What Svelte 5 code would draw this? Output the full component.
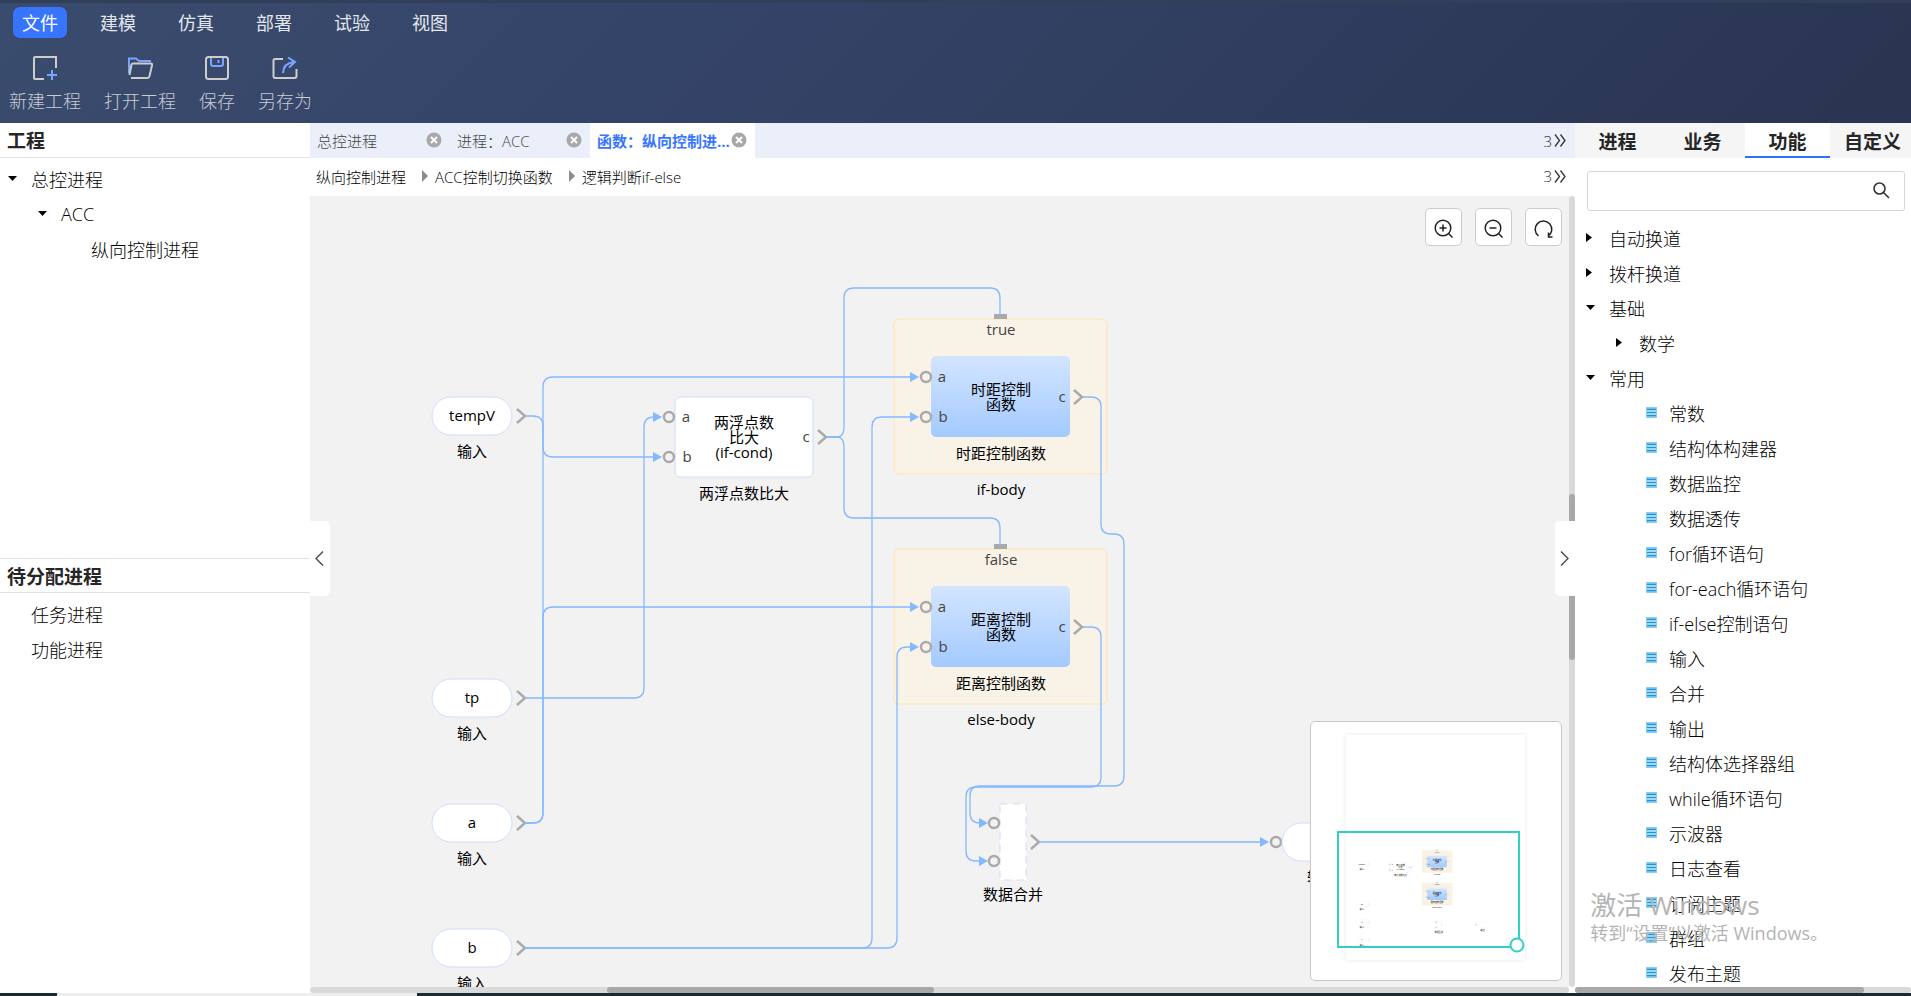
<script>
    let menus = ["文件", "建模", "仿真", "部署", "试验", "视图"];
    let menuActif = $state("文件");

    let outils = [
        { id: "new", nom: "新建工程" },
        { id: "open", nom: "打开工程" },
        { id: "save", nom: "保存" },
        { id: "saveas", nom: "另存为" },
    ];

    let projet = [
        { nom: "总控进程", niveau: 0, type: "open" },
        { nom: "ACC", niveau: 1, type: "open" },
        { nom: "纵向控制进程", niveau: 2, type: "" },
    ];
    let enAttente = ["任务进程", "功能进程"];

    let onglets = [
        { nom: "总控进程" },
        { nom: "进程：ACC" },
        { nom: "函数：纵向控制进...", actif: true },
    ];
    let chemin = ["纵向控制进程", "ACC控制切换函数", "逻辑判断if-else"];

    let familles = ["进程", "业务", "功能", "自定义"];
    let familleActive = $state("功能");
    let recherche = $state("");

    let communs = [
        "常数",
        "结构体构建器",
        "数据监控",
        "数据透传",
        "for循环语句",
        "for-each循环语句",
        "if-else控制语句",
        "输入",
        "合并",
        "输出",
        "结构体选择器组",
        "while循环语句",
        "示波器",
        "日志查看",
        "订阅主题",
        "群组",
        "发布主题",
    ];
    let biblio = [
        { nom: "自动换道", niveau: 0, type: "closed" },
        { nom: "拨杆换道", niveau: 0, type: "closed" },
        { nom: "基础", niveau: 0, type: "open" },
        { nom: "数学", niveau: 1, type: "closed" },
        { nom: "常用", niveau: 0, type: "open" },
        ...communs.map((nom) => ({ nom, niveau: 2, type: "leaf" })),
    ];

    // Graph
    let entrees = [
        { nom: "tempV", y: 220 },
        { nom: "tp", y: 502 },
        { nom: "a", y: 627 },
        { nom: "b", y: 752 },
    ];
    let groupes = [
        { y: 123, cond: "true", lignes: ["时距控制", "函数"], nom: "时距控制函数", titre: "if-body" },
        { y: 353, cond: "false", lignes: ["距离控制", "函数"], nom: "距离控制函数", titre: "else-body" },
    ];
    let liens = [
        "M215 220H223Q233 220 233 230V251Q233 261 243 261H346",
        "M215 627H223Q233 627 233 617V191Q233 181 243 181H602",
        "M215 627H223Q233 627 233 617V421Q233 411 243 411H602",
        "M215 502H324Q334 502 334 492V231Q334 221 344 221H346",
        "M517 241H527Q534 241 534 231V102Q534 92 544 92H680Q690 92 690 102V120",
        "M517 241H527Q534 241 534 251V312Q534 322 544 322H680Q690 322 690 332V350",
        "M215 752H552Q562 752 562 742V231Q562 221 572 221H602",
        "M215 752H577Q587 752 587 742V461Q587 451 597 451H602",
        "M773 201H781Q791 201 791 211V328Q791 338 801 338H804Q814 338 814 348V580Q814 590 804 590H670Q660 590 660 600V617Q660 627 670 627H671",
        "M773 431H781Q791 431 791 441V581Q791 591 781 591H666Q656 591 656 601V655Q656 665 666 665H671",
        "M729 646H952",
    ];
    let fleches = [
        [352, 221],
        [352, 261],
        [609, 181],
        [609, 221],
        [609, 411],
        [609, 451],
        [678, 627],
        [678, 665],
        [959, 646],
    ];
</script>

{#snippet port(x, y)}
    <circle class="port" cx={x} cy={y} r="5" />
{/snippet}

{#snippet sortie(x, y)}
    <path class="sortie" d="M{x} {y - 7}l8 7l-8 7" />
{/snippet}

{#snippet noeuds()}
    {#each entrees as e}
        <rect class="bloc" x="122" y={e.y - 19} width="80" height="38" rx="19" />
        <text x="162" y={e.y + 5}>{e.nom}</text>
        <text x="162" y={e.y + 41}>输入</text>
        {@render sortie(207, e.y)}
    {/each}

    <rect class="bloc" x="365" y="201" width="138" height="80" rx="5" />
    <text x="434" y="232">两浮点数</text>
    <text x="434" y="247">比大</text>
    <text x="434" y="262">(if-cond)</text>
    <text x="434" y="303">两浮点数比大</text>
    <text class="nomPort" x="376" y="226">a</text>
    <text class="nomPort" x="377" y="266">b</text>
    <text class="nomPort" x="496" y="246">c</text>
    {@render port(359, 221)}
    {@render port(359, 261)}
    {@render sortie(508, 241)}

    {#each groupes as g}
        <rect class="groupe" x="584" y={g.y} width="213" height="155" rx="5" />
        <rect class="poignee" x="684" y={g.y - 5} width="13" height="5" />
        <text class="nomPort" x="691" y={g.y + 16}>{g.cond}</text>
        <rect class="fonction" x="621" y={g.y + 37} width="139" height="81" rx="5" />
        {#each g.lignes as ligne, i}
            <text x="691" y={g.y + 76 + i * 15}>{ligne}</text>
        {/each}
        <text x="691" y={g.y + 140}>{g.nom}</text>
        <text x="691" y={g.y + 176}>{g.titre}</text>
        <text class="nomPort" x="632" y={g.y + 63}>a</text>
        <text class="nomPort" x="633" y={g.y + 103}>b</text>
        <text class="nomPort" x="752" y={g.y + 83}>c</text>
        {@render port(616, g.y + 58)}
        {@render port(616, g.y + 98)}
        {@render sortie(764, g.y + 78)}
    {/each}

    <rect class="bloc fusion" x="690" y="608" width="26" height="76" />
    <text x="703" y="704">数据合并</text>
    {@render port(684, 627)}
    {@render port(684, 665)}
    {@render sortie(721, 646)}

    {@render port(966, 646)}
    <rect class="bloc" x="972" y="627" width="80" height="38" rx="19" />
    <text x="1012" y="687">输出</text>
{/snippet}

{#snippet arbre(liste)}
    <ul class="arbre">
        {#each liste as n}
            <li class="niveau{n.niveau}">
                <span class="marque">
                    {#if n.type == "open"}
                        <svg width="10" height="6"><path d="M0 0h9l-4.500 5z" /></svg>
                    {:else if n.type == "closed"}
                        <svg width="6" height="10"><path d="M0 0v9l6-4.500z" /></svg>
                    {:else if n.type == "leaf"}
                        <svg width="11" height="11">
                            <rect width="11" height="11" fill="#8ccdf2" />
                            <path d="M1 2.500h9M1 5.500h9M1 8.500h9" stroke="#1e96dc" stroke-width="1.500" />
                            <path d="M1 4h9M1 7h9" stroke="#d3ecfa" />
                        </svg>
                    {/if}
                </span>
                {n.nom}
            </li>
        {/each}
    </ul>
{/snippet}

{#snippet suite()}
    <button class="suite" aria-label="更多">
        3
        <svg width="12" height="13" fill="none" stroke="#333" stroke-width="1.3">
            <path d="M1 .5l4.500 6l-4.500 6M6.500 .5l4.500 6l-4.500 6" />
        </svg>
    </button>
{/snippet}

<div class="page">
    <header>
        <nav class="menu">
            {#each menus as m}
                <button class:actif={m == menuActif} onclick={() => (menuActif = m)}>{m}</button>
            {/each}
        </nav>
        <div class="outils">
            {#each outils as o}
                <button>
                    <svg width="26" height="26" fill="none" stroke="#cdcdcd" stroke-width="2">
                        {#if o.id == "new"}
                            <path d="M12 24H3Q2 24 2 23V3Q2 2 3 2H24V13" />
                            <path d="M20 15v10M15 20h10" stroke="#7aa5ff" />
                        {:else if o.id == "open"}
                            <path d="M2 18V3.500H9l3 2.500H24" stroke="#7aa5ff" />
                            <path d="M2.500 20L4.500 9.500Q4.800 8.500 6 8.500H24Q25.500 8.500 25 10.500L22.500 21Q22 23 20.500 23H4" />
                        {:else if o.id == "save"}
                            <rect x="2" y="2" width="22" height="22" rx="2.500" />
                            <path d="M7 3V9Q7 11 9 11H17Q19 11 19 9V3M14.500 5v3" stroke="#7aa5ff" />
                        {:else}
                            <path d="M11 4H3Q1.500 4 1.500 5.500V21Q1.500 23 3 23H22.500Q24.500 23 24.500 21V14" />
                            <path d="M11 18Q11.500 8 22 7M16 2.500L23 7L17 12.500" stroke="#7aa5ff" />
                        {/if}
                    </svg>
                    <span>{o.nom}</span>
                </button>
            {/each}
        </div>
    </header>

    <main>
        <aside class="gauche">
            <section>
                <h2>工程</h2>
                {@render arbre(projet)}
            </section>
            <section>
                <h2 class="second">待分配进程</h2>
                {@render arbre(enAttente.map((nom) => ({ nom, niveau: 0, type: "" })))}
            </section>
        </aside>

        <div class="centre">
            <div class="onglets">
                {#each onglets as o}
                    <div class="onglet" class:actif={o.actif}>
                        <span>{o.nom}</span>
                        <button aria-label="关闭">
                            <svg width="16" height="16">
                                <circle cx="8" cy="8" r="7.500" fill="#a8a8a8" />
                                <path d="M5 5l6 6M11 5l-6 6" stroke="#fff" stroke-width="2" />
                            </svg>
                        </button>
                    </div>
                {/each}
                {@render suite()}
            </div>
            <div class="chemin">
                {#each chemin as c, i}
                    {#if i > 0}
                        <svg width="6" height="12"><path d="M0 0l6 6l-6 6z" fill="#8c8c8c" /></svg>
                    {/if}
                    <a href="#niveau{i}">{c}</a>
                {/each}
                {@render suite()}
            </div>

            <div class="zone">
                <div class="canvas">
                    <svg class="graphe">
                        <defs>
                            <linearGradient id="bleu" x1="0" y1="0" x2="0" y2="1">
                                <stop offset="0" stop-color="#d3e5ff" />
                                <stop offset="1" stop-color="#a3caff" />
                            </linearGradient>
                        </defs>
                        {@render noeuds()}
                        {#each liens as d}
                            <path class="lien" {d} />
                        {/each}
                        {#each fleches as [x, y]}
                            <path class="fleche" d="M{x} {y}l-9-5v10z" />
                        {/each}
                    </svg>

                    <div class="zoom">
                        <button aria-label="放大">
                            <svg width="20" height="20"><circle cx="9" cy="9" r="7.800" /><path d="M14.500 14.500l4 4M9 5.500v7M5.500 9h7" /></svg>
                        </button>
                        <button aria-label="缩小">
                            <svg width="20" height="20"><circle cx="9" cy="9" r="7.800" /><path d="M14.500 14.500l4 4M5.500 9h7" /></svg>
                        </button>
                        <button aria-label="重置">
                            <svg width="20" height="20"><path d="M4.500 17A8.300 8.300 0 1 1 14 17.300M14.500 13.500v4.500h4" /></svg>
                        </button>
                    </div>

                    <div class="apercu">
                        <svg width="250" height="258">
                            <rect class="feuille" x="35" y="13" width="179" height="225" />
                            <g transform="translate(28 111) scale(0.142)">
                                {@render noeuds()}
                            </g>
                            <rect class="vue" x="27" y="110" width="181" height="115" />
                            <circle class="vue plein" cx="206" cy="223" r="6.500" />
                        </svg>
                    </div>
                </div>
                <div class="barreV"><i></i></div>
                <div class="barreH"><i></i></div>
            </div>

            <button class="replier aGauche" aria-label="收起左侧">
                <svg width="9" height="15"><path d="M8 .5l-7 7l7 7" /></svg>
            </button>
            <button class="replier aDroite" aria-label="收起右侧">
                <svg width="9" height="15"><path d="M1 .5l7 7l-7 7" /></svg>
            </button>
        </div>

        <aside class="droite">
            <div class="familles">
                {#each familles as f}
                    <button class:actif={f == familleActive} onclick={() => (familleActive = f)}>{f}</button>
                {/each}
            </div>
            <label class="recherche">
                <input type="text" aria-label="搜索" bind:value={recherche} />
                <svg width="17" height="17" fill="none" stroke="#333" stroke-width="1.600">
                    <circle cx="6.500" cy="6.500" r="5.500" /><path d="M10.500 10.500l5.500 5.500" />
                </svg>
            </label>
            <div class="liste">
                {@render arbre(biblio)}
            </div>
            <div class="barreH"><i></i></div>
        </aside>
    </main>

    <footer><i></i></footer>

    <div class="filigrane">
        <p class="grand">激活 Windows</p>
        <p>转到“设置”以激活 Windows。</p>
    </div>
</div>

<style>
    .page {
        display: flex;
        flex-direction: column;
        height: 100vh;
        overflow: hidden;
        font-family: "Open Sans", "Noto Sans CJK SC", sans-serif;
        font-weight: 300;
        font-size: 18px;
        color: #000;
        background: #fff;
    }
    button {
        padding: 0;
        border: 0;
        background: none;
        font: inherit;
        color: inherit;
        cursor: pointer;
    }
    svg {
        display: block;
        flex: none;
    }

    /* Header */
    header {
        box-sizing: border-box;
        height: 123px;
        flex: none;
        border-top: 3px solid #313f5b;
        background: linear-gradient(135deg, #3a4c6d, #35456a 30%, #2a3451);
    }
    .menu {
        display: flex;
        gap: 24px;
        padding: 4px 13px;
    }
    .menu button {
        height: 31px;
        padding: 0 9px;
        border-radius: 7px;
        line-height: 33px;
        font-weight: 400;
        color: #e3e6ec;
    }
    .menu button.actif {
        background: #3875ff;
        color: #fff;
    }
    .outils {
        display: flex;
        gap: 23px;
        padding: 13px 9px;
    }
    .outils button {
        display: flex;
        flex-direction: column;
        align-items: center;
        gap: 8px;
        line-height: 24px;
        color: #c8ccd4;
    }

    main {
        display: flex;
        flex: 1;
        min-height: 0;
    }

    /* Project tree */
    .gauche {
        display: flex;
        flex-direction: column;
        width: 310px;
        flex: none;
    }
    .gauche section {
        flex: 1;
    }
    h2 {
        margin: 0;
        padding-left: 7px;
        height: 34px;
        line-height: 37px;
        border-bottom: 1px solid #e2e2e2;
        font-size: 19px;
        font-weight: 700;
        color: #262626;
    }
    h2.second {
        height: 33px;
        border-top: 1px solid #e2e2e2;
    }
    .arbre {
        margin: 0;
        padding: 3px 0 0 8px;
        list-style: none;
    }
    .arbre li {
        display: flex;
        align-items: center;
        height: 35px;
        white-space: nowrap;
    }
    .arbre .niveau1 {
        padding-left: 30px;
    }
    .arbre .niveau2 {
        padding-left: 60px;
    }
    .marque {
        width: 23px;
        flex: none;
    }

    /* Center */
    .centre {
        position: relative;
        display: flex;
        flex-direction: column;
        flex: 1;
        min-width: 0;
        font-size: 15px;
    }
    .onglets {
        display: flex;
        height: 35px;
        background: #eaeff9;
    }
    .onglet {
        box-sizing: border-box;
        display: flex;
        align-items: center;
        justify-content: space-between;
        width: 140px;
        padding: 0 8px 1px 7px;
        white-space: nowrap;
        color: #444;
    }
    .onglet.actif {
        width: 165px;
        background: #fff;
        font-weight: 700;
        color: #3875ff;
    }
    .suite {
        display: flex;
        align-items: center;
        gap: 2px;
        margin-left: auto;
        padding-right: 9px;
        color: #333;
    }
    .chemin {
        display: flex;
        align-items: center;
        height: 36px;
        padding: 0 0 2px 6px;
    }
    .chemin a {
        margin-right: 16px;
        color: inherit;
        text-decoration: none;
    }
    .chemin > svg {
        margin-right: 7px;
    }
    .zone {
        display: grid;
        grid-template-columns: 1fr 6px;
        grid-template-rows: minmax(0, 1fr) 6px;
        flex: 1;
        min-height: 0;
    }
    .canvas {
        position: relative;
        overflow: hidden;
        background: #f2f2f2;
    }
    .graphe {
        width: 100%;
        height: 100%;
    }
    text {
        font-size: 15px;
        font-weight: 400;
        text-anchor: middle;
        fill: #000;
    }
    .nomPort {
        fill: #444;
    }
    .bloc {
        fill: #fff;
        stroke: #cfdcfb;
    }
    .fusion {
        stroke-dasharray: 7 6;
    }
    .groupe {
        fill: #f9f2e6;
        stroke: #fde3b0;
    }
    .fonction {
        fill: url(#bleu);
    }
    .poignee {
        fill: #a9a9a9;
    }
    .port,
    .sortie {
        fill: none;
        stroke: #a9a9a9;
        stroke-width: 2.4;
    }
    .lien {
        fill: none;
        stroke: #84b8ff;
        stroke-width: 1.3;
    }
    .fleche {
        fill: #84b8ff;
    }
    .zoom {
        position: absolute;
        top: 12px;
        right: 7px;
        display: flex;
        gap: 13px;
    }
    .zoom button {
        box-sizing: border-box;
        display: flex;
        align-items: center;
        justify-content: center;
        width: 37px;
        height: 38px;
        padding-top: 3px;
        border: 1px solid #ccc;
        border-radius: 5px;
        background: #fff;
    }
    .zoom svg {
        fill: none;
        stroke: #222;
        stroke-width: 1.5;
    }
    .apercu {
        position: absolute;
        right: 7px;
        bottom: 6px;
        border: 1px solid #c8c8c8;
        border-radius: 5px;
        background: #fff;
    }
    .feuille {
        fill: #fff;
        filter: drop-shadow(0 0 2px #e8e8e8);
    }
    .vue {
        fill: none;
        stroke: #31d0c6;
        stroke-width: 2;
    }
    .plein {
        fill: #fff;
    }

    /* Scroll bars */
    .barreV,
    .barreH {
        display: flex;
        border-radius: 3px;
        background: #d9d9d9;
    }
    .barreV {
        flex-direction: column;
    }
    .barreV i,
    .barreH i {
        border-radius: 3px;
        background: #a8a8a8;
    }
    .barreV i {
        height: 21%;
        margin-top: 298px;
    }
    .zone .barreH i {
        width: 26%;
        margin-left: 297px;
    }
    .droite .barreH {
        height: 6px;
        flex: none;
    }
    .droite .barreH i {
        width: 86%;
    }

    .replier {
        position: absolute;
        top: calc(50% - 37px);
        display: flex;
        align-items: center;
        justify-content: center;
        width: 20px;
        height: 75px;
        padding-right: 2px;
        box-sizing: border-box;
        background: #fff;
    }
    .replier svg {
        fill: none;
        stroke: #444;
        stroke-width: 1.3;
    }
    .aGauche {
        left: 0;
        border-radius: 0 5px 5px 0;
    }
    .aDroite {
        right: 0;
        border-radius: 5px 0 0 5px;
    }

    /* Library */
    .droite {
        display: flex;
        flex-direction: column;
        width: 336px;
        flex: none;
        overflow: hidden;
    }
    .familles {
        display: flex;
        height: 35px;
        flex: none;
        background: #f5f5f5;
    }
    .familles button {
        box-sizing: border-box;
        width: 85px;
        flex: none;
        padding-top: 2px;
        border-bottom: 2px solid transparent;
        font-size: 19px;
        font-weight: 700;
        white-space: nowrap;
        color: #262626;
    }
    .familles button.actif {
        background: #fff;
        border-color: #2f6fff;
    }
    .recherche {
        box-sizing: border-box;
        display: flex;
        align-items: center;
        height: 40px;
        flex: none;
        margin: 13px 6px 6px 12px;
        padding: 0 14px 2px 8px;
        border: 1px solid #d6d6d6;
        border-radius: 3px;
    }
    .recherche input {
        flex: 1;
        min-width: 0;
        border: 0;
        outline: 0;
        font: inherit;
    }
    .liste {
        flex: 1;
        min-height: 0;
        overflow: hidden;
    }
    .liste .arbre {
        padding-left: 11px;
    }

    footer {
        height: 3px;
        flex: none;
        background: #1c2a2f;
    }
    footer i {
        display: block;
        width: 360px;
        height: 3px;
        margin-left: 57px;
        background: #eee;
    }

    .filigrane {
        position: absolute;
        right: 83px;
        bottom: 51px;
        color: #b4b4b4;
        pointer-events: none;
    }
    .filigrane p {
        margin: 0;
        line-height: 24px;
        font-weight: 400;
    }
    .filigrane .grand {
        font-size: 26px;
        line-height: 32px;
    }
</style>
